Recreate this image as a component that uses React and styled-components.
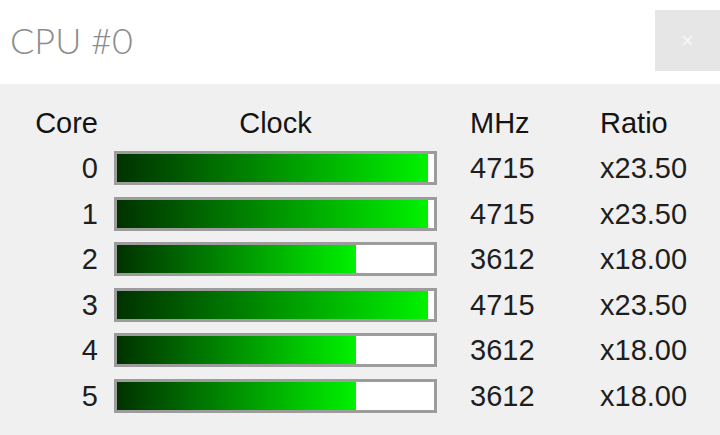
import React from "react";
import styled, { createGlobalStyle } from "styled-components";

const GlobalStyle = createGlobalStyle`
  html, body { margin: 0; padding: 0; background: #f0f0f0; }
  body { font-family: "Liberation Sans", Arial, sans-serif; }
`;

const Window = styled.div`
  width: 720px;
  height: 435px;
  display: flex;
  flex-direction: column;
  background: #f0f0f0;
  overflow: hidden;
`;

const TitleBar = styled.div`
  height: 84px;
  flex: none;
  background: #ffffff;
  display: flex;
  align-items: flex-start;
  justify-content: space-between;
`;

const Title = styled.div`
  margin: 22px 0 0 10px;
  font-family: "Lato", "Liberation Sans", sans-serif;
  font-weight: 300;
  font-size: 36px;
  line-height: 36px;
  color: #8c8c8c;
`;

const CloseButton = styled.button`
  margin-top: 10px;
  width: 65px;
  height: 61px;
  border: none;
  padding: 0;
  background: #e6e6e6;
  color: #f6f6f6;
  font-family: "Liberation Sans", sans-serif;
  font-size: 22px;
  display: flex;
  align-items: center;
  justify-content: center;
`;

const Table = styled.div`
  padding-top: 16px;
  display: grid;
  grid-template-columns: 98px 339px 163px 1fr;
  grid-auto-rows: 45.5px;
  align-items: center;
  font-size: 29px;
  color: #1e1e1e;
`;

const Cell = styled.div`
  text-align: ${(p) => p.$align || "left"};
  padding-left: ${(p) => p.$pad || 0}px;
  line-height: 32px;
  white-space: nowrap;
`;

const HeadCell = styled(Cell)`
  color: #141414;
`;

const BarCell = styled.div`
  padding-left: 16px;
`;

const BarTrack = styled.div`
  width: 323px;
  height: 34px;
  box-sizing: border-box;
  border: 3px solid #9c9c9c;
  background: #ffffff;
  display: flex;
`;

const BarFill = styled.div`
  height: 100%;
  background: linear-gradient(to right, #003200, #00f200);
`;

const cores = [
  { id: 0, mhz: 4715, ratio: "x23.50" },
  { id: 1, mhz: 4715, ratio: "x23.50" },
  { id: 2, mhz: 3612, ratio: "x18.00" },
  { id: 3, mhz: 4715, ratio: "x23.50" },
  { id: 4, mhz: 3612, ratio: "x18.00" },
  { id: 5, mhz: 3612, ratio: "x18.00" },
];

const MAX_MHZ = 4800;

export default function App() {
  return (
    <>
      <GlobalStyle />
      <Window>
        <TitleBar>
          <Title>CPU #0</Title>
          <CloseButton>×</CloseButton>
        </TitleBar>
        <Table>
          <HeadCell $align="right">Core</HeadCell>
          <HeadCell $align="center" $pad={16}>Clock</HeadCell>
          <HeadCell $pad={33}>MHz</HeadCell>
          <HeadCell>Ratio</HeadCell>
          {cores.map((c) => (
            <React.Fragment key={c.id}>
              <Cell $align="right">{c.id}</Cell>
              <BarCell>
                <BarTrack>
                  <BarFill style={{ width: `${(c.mhz / MAX_MHZ) * 100}%` }} />
                </BarTrack>
              </BarCell>
              <Cell $pad={33}>{c.mhz}</Cell>
              <Cell>{c.ratio}</Cell>
            </React.Fragment>
          ))}
        </Table>
      </Window>
    </>
  );
}
